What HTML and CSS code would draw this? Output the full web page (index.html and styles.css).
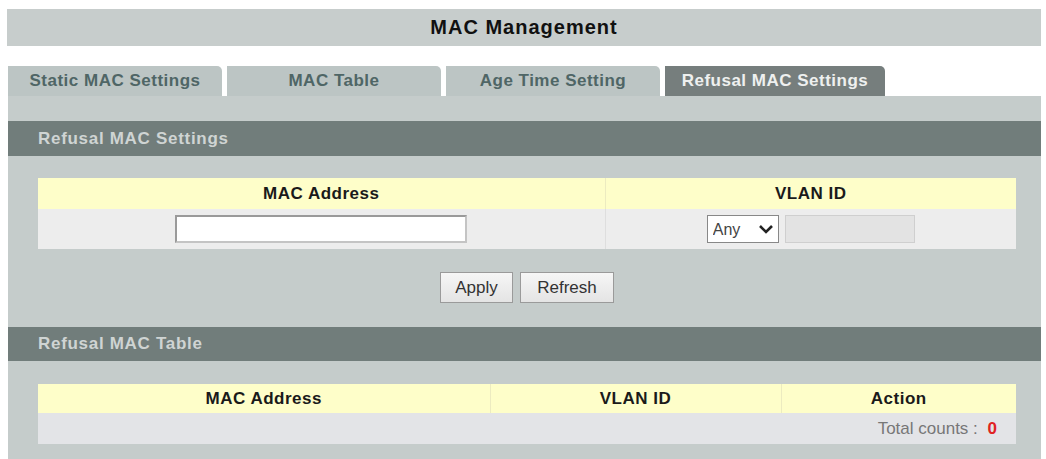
FILE: index.html
```html
<!DOCTYPE html>
<html>
  <head>
    <meta charset="utf-8">
    <title>MAC Management</title>
    <link rel="stylesheet" href="styles.css">
  </head>
  <body>
    <div class="page">
      <div class="title">MAC Management</div>
      <div class="tabs">
        <div class="tab">Static MAC Settings</div>
        <div class="tab">MAC Table</div>
        <div class="tab">Age Time Setting</div>
        <div class="tab active">Refusal MAC Settings</div>
      </div>
      <div class="panel">
        <div class="section-head">Refusal MAC Settings</div>
        <table class="grid form">
          <tr class="head">
            <th class="col-mac">MAC Address</th>
            <th>VLAN ID</th>
          </tr>
          <tr class="row">
            <td><input class="mac" type="text"></td>
            <td>
              <span class="vlan">
                <span class="select-wrap">
                  <select class="any">
                    <option>Any</option>
                  </select>
                  <svg class="chev" width="16" height="10" viewBox="0 0 16 10">
                    <path d="M2 2 L8 8 L14 2" fill="none" stroke="#222" stroke-width="2.6"/>
                  </svg>
                </span>
                <input class="vid" type="text" disabled>
              </span>
            </td>
          </tr>
        </table>
        <div class="actions">
          <button class="btn">Apply</button>
          <button class="btn">Refresh</button>
        </div>
        <div class="section-head second">Refusal MAC Table</div>
        <table class="grid list">
          <tr class="head">
            <th class="c1">MAC Address</th>
            <th class="c2">VLAN ID</th>
            <th>Action</th>
          </tr>
          <tr class="row">
            <td colspan="3" class="total">Total counts : <span class="count">0</span></td>
          </tr>
        </table>
      </div>
    </div>
  </body>
</html>
```
FILE: styles.css
```css
* {
box-sizing: border-box;
}
body {
margin: 0;
background: #ffffff;
font-family: "Liberation Sans", Arial, sans-serif;
}
.page {
padding: 9px 5px 0 8px;
}
.title {
height: 37px;
line-height: 37px;
background-color: #c7cdcc;
text-align: center;
font-size: 20px;
font-weight: bold;
letter-spacing: 1px;
color: #111;
margin-left: -1px;
}
.tabs {
display: flex;
gap: 5px;
margin-top: 20px;
height: 30px;
}
.tab {
width: 214px;
height: 30px;
line-height: 30px;
text-align: center;
background-color: #bcc5c4;
color: #4f6666;
font-size: 17px;
font-weight: bold;
letter-spacing: 0.5px;
border-top-right-radius: 5px;
}
.tab.active {
width: 220px;
background-color: #767e7d;
color: #eef0ef;
}
.panel {
background-color: #c5cccb;
padding-top: 25px;
padding-bottom: 20px;
}
.section-head {
height: 35px;
line-height: 35px;
padding-left: 30px;
background-color: #717d7b;
color: #cfd4d3;
font-size: 17px;
font-weight: bold;
letter-spacing: 0.7px;
}
.section-head.second {
height: 34px;
line-height: 34px;
}
.grid {
border-collapse: collapse;
width: 978px;
margin: 22px 25px 0 30px;
}
.grid th {
background-color: #fefec9;
font-size: 17px;
font-weight: bold;
letter-spacing: 0.5px;
color: #1a1a1a;
padding: 0;
}
.form .head th {
height: 31px;
}
.form .row td {
height: 40px;
background-color: #ededed;
text-align: center;
padding: 0;
}
.grid th + th,
.form .row td + td {
border-left: 1px solid #dedede;
}
.grid th + th {
border-left-color: #ecebc0;
}
.col-mac {
width: 567px;
}
.mac {
width: 292px;
height: 28px;
border: 2px solid #9a9a9a;
border-right-color: #c4c4c4;
border-bottom-color: #c4c4c4;
background: #fff;
vertical-align: middle;
}
.vlan {
display: inline-flex;
gap: 6px;
vertical-align: middle;
}
.select-wrap {
position: relative;
display: inline-block;
}
.any {
appearance: none;
width: 72px;
height: 28px;
border: 1px solid #888;
background: #fff;
font-family: "Liberation Sans", Arial, sans-serif;
font-size: 16px;
color: #444;
padding: 0 0 0 5px;
border-radius: 0;
}
.chev {
position: absolute;
right: 5px;
top: 9px;
pointer-events: none;
}
.vid {
width: 130px;
height: 28px;
border: 1px solid #cfcfcf;
background: #e3e3e3;
}
.actions {
display: flex;
justify-content: center;
gap: 7px;
width: 978px;
margin: 23px 0 24px 30px;
}
.btn {
height: 31px;
padding: 0 10px;
font-family: "Liberation Sans", Arial, sans-serif;
font-size: 17px;
color: #333;
background: linear-gradient(#f6f6f6, #e4e4e4);
border: 1px solid #9a9a9a;
border-radius: 0;
}
.btn:first-child {
width: 73px;
}
.btn + .btn {
width: 94px;
}
.list {
margin-top: 23px;
}
.list .head th {
height: 29px;
}
.list .c1 {
width: 452px;
}
.list .c2 {
width: 291px;
}
.total {
height: 31px;
background-color: #e3e4e7;
text-align: right;
padding: 0 19px 0 0;
font-size: 17px;
color: #777;
}
.count {
color: #e02222;
font-weight: bold;
margin-left: 5px;
}
```
